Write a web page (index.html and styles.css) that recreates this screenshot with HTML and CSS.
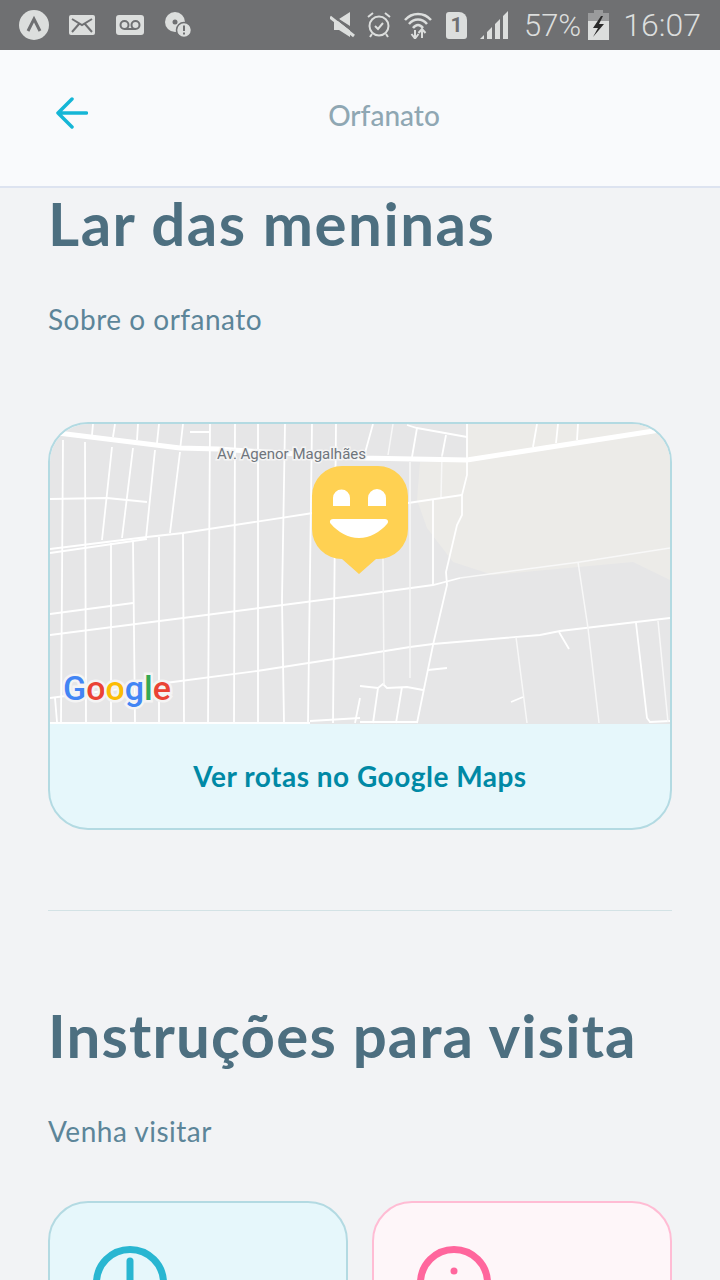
FILE: index.html
```html
<!DOCTYPE html>
<html lang="pt-BR">
<head>
    <meta charset="UTF-8">
    <meta name="viewport" content="width=device-width, initial-scale=1.0">
    <title>Orfanato</title>
    <link rel="stylesheet" href="styles.css">
</head>
<body>
    <div class="status-bar">
        <div class="status-left">
            <svg class="st-icon" width="30" height="30" viewBox="0 0 30 30"><circle cx="15" cy="15" r="15" fill="#dcdedd"/><path d="M9 21 L15 9 L21 21" fill="none" stroke="#6f7072" stroke-width="3"/></svg>
            <svg class="st-icon" width="26" height="20" viewBox="0 0 26 20"><rect width="26" height="20" rx="2" fill="#dcdedd"/><path d="M3 4 L13 10 L23 4 M3 17 L10 9 M23 17 L16 9" fill="none" stroke="#6f7072" stroke-width="2"/></svg>
            <svg class="st-icon" width="28" height="20" viewBox="0 0 28 20"><rect width="28" height="20" rx="3" fill="#dcdedd"/><circle cx="8.500" cy="10" r="4" fill="none" stroke="#6f7072" stroke-width="2"/><circle cx="19.500" cy="10" r="4" fill="none" stroke="#6f7072" stroke-width="2"/><path d="M8.500 14 H19.500" stroke="#6f7072" stroke-width="2"/></svg>
            <svg class="st-icon" width="26" height="26" viewBox="0 0 26 26"><circle cx="10" cy="10" r="10" fill="#dcdedd"/><circle cx="10" cy="10" r="2.500" fill="#6f7072"/><circle cx="19" cy="18" r="7.500" fill="#dcdedd" stroke="#6f7072" stroke-width="1.500"/><path d="M19 13.500 V19 M19 20.500 V22.500" stroke="#6f7072" stroke-width="2"/></svg>
        </div>
        <div class="status-right">
            <svg width="26" height="28" viewBox="0 0 26 28"><path d="M9 8 L20 1 V15 Z M4 10 H8 L20 19 V26 L9 19 H4 Z" fill="#dcdedd"/><path d="M1 3 L26 23" stroke="#6f7072" stroke-width="2"/><path d="M0 6 L24 25" stroke="#dcdedd" stroke-width="3"/></svg>
            <svg class="st-alarm" width="24" height="28" viewBox="0 0 24 28"><circle cx="12" cy="15" r="9.500" fill="none" stroke="#dcdedd" stroke-width="2"/><path d="M1 6 L6 2 M23 6 L18 2 M5 23 L3 26 M19 23 L21 26" stroke="#dcdedd" stroke-width="2"/><path d="M8 15 L11 18 L16 12" fill="none" stroke="#dcdedd" stroke-width="2"/></svg>
            <svg class="st-wifi" width="28" height="28" viewBox="0 0 28 28"><path d="M1 9 C8 1 20 1 27 9 M5 13 C10 7 18 7 23 13 M9 17 C12 13 16 13 19 17" fill="none" stroke="#dcdedd" stroke-width="2.500"/><path d="M11 19 V27 M7.500 23 L11 27.500 L14.500 23 M18 27 V19 M14.500 22 L18 18 L21.500 22" fill="none" stroke="#dcdedd" stroke-width="2"/></svg>
            <div class="st-sim">1</div>
            <svg class="st-signal" width="28" height="28" viewBox="0 0 28 28"><path d="M0 28 L4 24 V28 Z M7 28 V21 L12 16 V28 Z M15 28 V13 L20 8 V28 Z M23 28 V5 L28 0 V28 Z" fill="#dcdedd"/></svg>
            <span class="st-percent">57%</span>
            <svg class="st-battery" width="21" height="30" viewBox="0 0 21 30"><path d="M6 0 H15 V3 H21 V30 H0 V3 H6 Z" fill="#dcdedd"/><path d="M6 0 H15 V3 H21 V11 H0 V3 H6 Z" fill="#9a9b9c"/><path d="M13 6 L5 18 H10 L5 27 L16 14 H11 L15 6 Z" fill="#2a2a2a"/></svg>
            <span class="st-time">16:07</span>
        </div>
    </div>

    <header class="nav">
        <svg class="back" width="32" height="32" viewBox="0 0 32 32"><path d="M30.500 16 H2 M16 2 L2 16 L16 30" fill="none" stroke="#15b6d6" stroke-width="3.500" stroke-linecap="round" stroke-linejoin="round"/></svg>
        <div class="nav-title">Orfanato</div>
    </header>

    <main class="content">
        <h1 class="title title-first">Lar das meninas</h1>
        <p class="subtitle">Sobre o orfanato</p>

        <section class="map-card">
            <svg class="map" width="620" height="300" viewBox="50 424 620 300">
                <rect x="50" y="424" width="620" height="300" fill="#e6e6e7"/>
                <path d="M467 424 H670 V580 L633 562 L493 575 L453 562 L427 528 L417 500 L420 462 H467 Z" fill="#ecebe8"/>

                <g class="street">
                    <path d="M63 440 L61 723 M85 442 L86 723 M112 447 L102 540 M133 448 L122 538 M155 450 L146 538 M180 452 L170 533"/>
                    <path d="M93 424 L92 435 M115 424 L113 437 M138 424 L137 440 M159 424 L157 443 M183 424 L180 450 M190 432 H210"/>
                    <path d="M210 424 L208 723 M235 424 L234 723 M258 424 V723 M285 424 L282 600 L284 723 M312 424 L308 723 M336 424 L333 723"/>
                    <path d="M50 549 L147 537 L183 533 L313 513 M50 553 L147 539 M50 499 L107 498 L147 502 M50 614 L133 603"/>
                    <path d="M50 635 L183 618 L360 595 L433 585 L460 578"/>
                    <path d="M50 698 L173 682 L257 671 L360 655 L410 647 L433 644 L540 635 L560 631 L670 618"/>
                    <path d="M111 543 V723 M133 541 L135 723 M159 537 V723 M183 534 L184 723 M55 698 L57 722"/>
                    <path d="M467 424 V475 L462 495 V515 L457 525 L446 572 L447 585 L433 645 L417 723"/>
                    <path d="M433 500 V585 M408 503 L462 495 M407 425 L417 428 L467 437 M417 428 L412 457 M373 424 L365 453"/>
                    <path d="M446 435 L442 456 M537 424 L533 447 M558 424 L556 443 M578 424 L577 440"/>
                    <path d="M360 686 L378 688 L383 684 L387 688 L407 687 L423 690 M378 688 L373 723 M402 687 L396 723 M355 723 L360 698"/>
                    <path d="M428 670 L447 668 M559 632 L569 649 M511 702 L523 697 M636 623 L647 718 L650 722 L670 721"/>
                    <path d="M360 722 H417 M310 721 L360 718 M50 723 H310"/>
                </g>
                <g class="street-thin">
                    <path d="M410 462 V678 M383 558 L384 685 M442 455 L441 497 M393 424 L388 455 M516 637 L527 723"/>
                    <path d="M460 578 L580 562 L670 548 M578 562 L588 628 L599 723 M658 621 L668 722"/>
                </g>
                <path class="road" d="M58 433 L180 448 L218 449 L360 458 L467 460 L660 430"/>

                <text class="map-label" x="217" y="459">Av. Agenor Magalhães</text>
                <text class="google" x="63" y="700"><tspan fill="#4285f4">G</tspan><tspan fill="#ea4335">o</tspan><tspan fill="#fbbc05">o</tspan><tspan fill="#4285f4">g</tspan><tspan fill="#34a853">l</tspan><tspan fill="#ea4335">e</tspan></text>

                <path d="M342 466 H378 A30 30 0 0 1 408 496 V529 A30 30 0 0 1 378 559 H376 L359 574 L342 559 A30 30 0 0 1 312 529 V496 A30 30 0 0 1 342 466 Z" fill="#ffd152"/>
                <path d="M333 506 V498 A8.500 8.500 0 0 1 350 498 V506 Z M368 506 V498 A9 9 0 0 1 386 498 V506 Z" fill="#fff"/>
                <path d="M333 519 H385 C388 519 389 522 387 524 C380 532 370 538 359 538 C348 538 338 532 331 524 C329 522 330 519 333 519 Z" fill="#fff"/>
            </svg>
            <div class="map-link">Ver rotas no Google Maps</div>
        </section>

        <hr class="divider">

        <h2 class="title title-second">Instruções para visita</h2>
        <p class="subtitle">Venha visitar</p>

        <div class="info-grid">
            <div class="info-card info-blue">
                <svg width="74" height="74" viewBox="0 0 74 74"><circle cx="37" cy="37" r="33.500" fill="none" stroke="#29b6d1" stroke-width="7"/><path d="M37 15 V37" stroke="#29b6d1" stroke-width="7" stroke-linecap="round"/></svg>
            </div>
            <div class="info-card info-pink">
                <svg width="74" height="74" viewBox="0 0 74 74"><circle cx="37" cy="37" r="33.500" fill="none" stroke="#ff669d" stroke-width="7"/><circle cx="37" cy="25" r="3.500" fill="#ff669d"/></svg>
            </div>
        </div>
    </main>
</body>
</html>
```

FILE: styles.css
```css
html, body {
    height: 1280px;
    margin: 0;
    overflow: hidden;
}
body {
    font-family: 'Lato', 'Noto Sans', sans-serif;
    background-color: #f2f3f5;
}
.status-bar {
    height: 50px;
    background: #6f7072;
    color: #dcdedd;
    display: flex;
    justify-content: space-between;
    align-items: center;
    font-family: 'Roboto', sans-serif;
    font-weight: 300;
}
.status-left {
    display: flex;
    align-items: center;
    gap: 21px;
    padding-left: 19px;
}
.status-left svg:first-child {
    margin-right: -1px;
}
.status-right {
    display: flex;
    align-items: center;
    padding-right: 19px;
}
.st-alarm {
    margin-left: 11px;
}
.st-wifi {
    margin-left: 13px;
}
.st-sim {
    width: 21px;
    height: 27px;
    margin-left: 14px;
    background: #dcdedd;
    color: #6f7072;
    border-radius: 3px 8px 3px 3px;
    font-size: 21px;
    font-weight: 700;
    line-height: 27px;
    text-align: center;
}
.st-signal {
    margin-left: 13px;
}
.st-percent {
    margin-left: 16px;
    font-size: 31px;
}
.st-battery {
    margin-left: 7px;
}
.st-time {
    margin-left: 14px;
    font-size: 32px;
}
.nav {
    height: 126px;
    background: #f9fafc;
    border-bottom: 2px solid #dde3f0;
    display: flex;
    align-items: center;
    padding: 0 40px 10px 56px;
}
.back {
    flex: none;
}
.nav-title {
    flex: 1;
    text-align: center;
    color: #8fa7b3;
    font-size: 28px;
    font-weight: 500;
    padding-top: 4px;
}
.content {
    padding: 0 48px;
}
.title {
    margin: 0;
    color: #4d6f80;
    font-size: 60px;
    font-weight: 700;
    line-height: 72px;
}
.title-first {
    margin-top: -1px;
    letter-spacing: 1.500px;
}
.title-second {
    margin-top: 88px;
    letter-spacing: 1.150px;
}
.subtitle {
    margin: 42px 0 0;
    color: #5c8599;
    font-size: 28px;
    line-height: 36px;
    letter-spacing: 0.500px;
}
.map-card {
    margin-top: 85px;
    border: 2px solid #b3dae2;
    border-radius: 40px;
    background: #e6f7fb;
    overflow: hidden;
}
.map {
    display: block;
}
.street path {
    fill: none;
    stroke: #fff;
    stroke-width: 1.800;
}
.street-thin path {
    fill: none;
    stroke: #f8f8f8;
    stroke-width: 1.500;
}
.road {
    fill: none;
    stroke: #fff;
    stroke-width: 5;
}
.map-label {
    font-family: 'Roboto', sans-serif;
    font-size: 15px;
    fill: #6f757c;
    stroke: #f4f4f4;
    stroke-width: 3px;
    paint-order: stroke;
}
.google {
    font-family: 'Roboto', sans-serif;
    font-size: 34px;
    font-weight: 500;
    stroke: #f4f4f4;
    stroke-width: 5px;
    paint-order: stroke;
}
.map-link {
    height: 104px;
    display: flex;
    align-items: center;
    justify-content: center;
    color: #0089a5;
    font-size: 28px;
    font-weight: 700;
    letter-spacing: 0.500px;
}
.divider {
    margin: 80px 0 0;
    border: none;
    border-top: 1px solid #d3e2e5;
}
.info-grid {
    margin-top: 52px;
    display: grid;
    grid-template-columns: 1fr 1fr;
    gap: 24px;
}
.info-card {
    height: 240px;
    padding: 43px;
    border-radius: 40px;
    border: 2px solid;
    box-sizing: border-box;
}
.info-blue {
    background: #e6f7fb;
    border-color: #b3dae2;
}
.info-pink {
    background: #fef6f9;
    border-color: #ffbcd4;
}
```
